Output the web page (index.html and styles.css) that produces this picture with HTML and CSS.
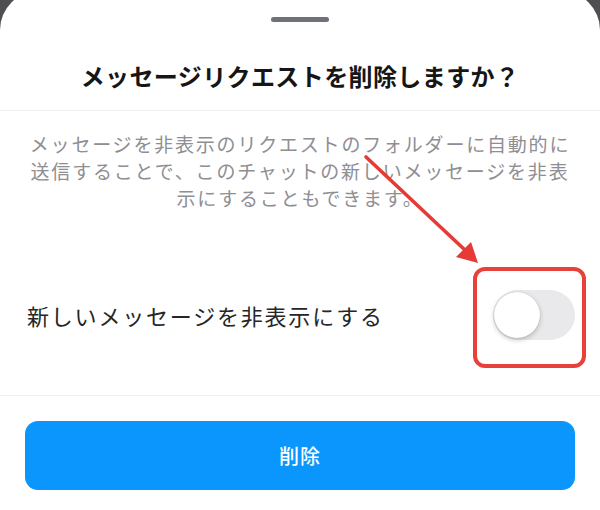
FILE: index.html
```html
<!DOCTYPE html>
<html lang="ja">
<head>
<meta charset="utf-8">
<link rel="stylesheet" href="styles.css">
</head>
<body>
<div class="sheet">
  <div class="handle-wrap"><div class="handle"></div></div>
  <div class="title">メッセージリクエストを削除しますか？</div>
  <p class="desc">メッセージを非表示のリクエストのフォルダーに自動的に<br>送信することで、このチャットの新しいメッセージを非表<br>示にすることもできます。</p>
  <div class="row">
    <span class="label">新しいメッセージを非表示にする</span>
    <div class="toggle"><div class="knob"></div></div>
  </div>
  <div class="actions">
    <button class="delete">削除</button>
  </div>
  <div class="highlight"></div>
  <svg class="arrow" width="600" height="519" viewBox="0 -9 600 519">
    <line x1="366" y1="157" x2="466" y2="251" stroke="#e53a35" stroke-width="3.6" stroke-linecap="round"/>
    <polygon points="478,263 456,257 471,242" fill="#e53a35"/>
  </svg>
</div>
</body>
</html>
```
FILE: styles.css
```css
html, body {
  margin: 0;
  padding: 0;
}
body {
  width: 600px;
  height: 510px;
  overflow: hidden;
  background: #4f4f51;
  font-family: "Noto Sans CJK JP", "Noto Sans", sans-serif;
}
.sheet {
  position: relative;
  margin-top: -9px;
  height: 519px;
  background: #ffffff;
  border-radius: 39px 39px 0 0;
}
.handle-wrap {
  display: flex;
  justify-content: center;
  padding-top: 26px;
}
.handle {
  width: 58px;
  height: 5px;
  border-radius: 3px;
  background: #6e707a;
}
.title {
  padding-top: 40px;
  padding-bottom: 20px;
  line-height: 28px;
  font-size: 24px;
  font-weight: 700;
  letter-spacing: 0.4px;
  text-align: center;
  color: #161616;
  border-bottom: 1px solid #efefef;
}
.desc {
  margin: 0;
  padding-top: 19px;
  font-size: 19px;
  line-height: 27px;
  letter-spacing: 1.8px;
  text-align: center;
  color: #8e8e93;
}
.row {
  display: flex;
  align-items: center;
  justify-content: space-between;
  margin-top: 79px;
  padding: 0 25px 55px 27px;
  border-bottom: 1px solid #efefef;
}
.label {
  font-size: 22px;
  letter-spacing: 1.8px;
  color: #262626;
}
.toggle {
  position: relative;
  width: 82px;
  height: 50px;
  border-radius: 25px;
  background: #e9e9eb;
}
.knob {
  position: absolute;
  left: 1px;
  top: 2px;
  width: 46px;
  height: 46px;
  border-radius: 50%;
  background: #ffffff;
  box-shadow: 0 2px 5px rgba(0, 0, 0, 0.22), 0 0 1px rgba(0, 0, 0, 0.2);
}
.actions {
  padding: 25px 25px 0;
}
.delete {
  display: block;
  width: 100%;
  height: 69px;
  border: none;
  border-radius: 13px;
  background: #0a96fc;
  color: #ffffff;
  font-family: "Noto Sans CJK JP", "Noto Sans", sans-serif;
  font-size: 20px;
  font-weight: 500;
  letter-spacing: 1px;
}
.highlight {
  position: absolute;
  left: 473px;
  top: 276px;
  width: 105px;
  height: 93px;
  border: 4px solid #e8413a;
  border-radius: 12px;
}
.arrow {
  position: absolute;
  left: 0;
  top: 0;
  pointer-events: none;
}
```
